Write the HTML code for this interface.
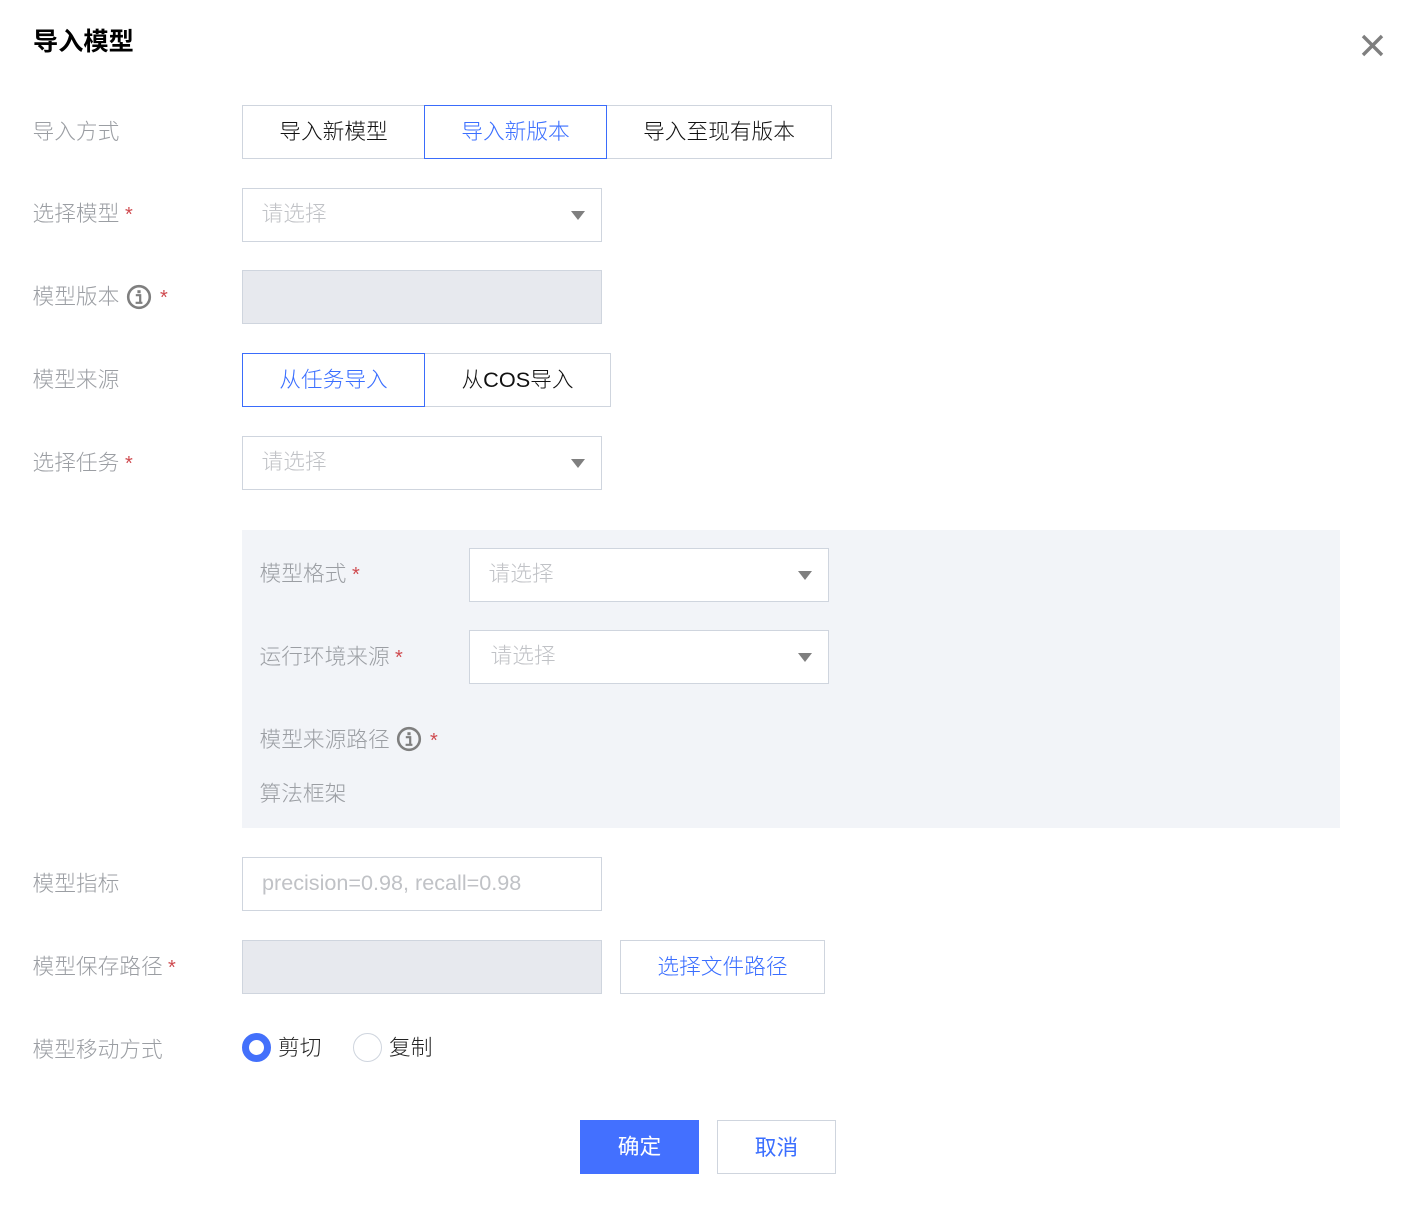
<!DOCTYPE html>
<html lang="zh-CN">
<head>
<meta charset="utf-8">
<title>导入模型</title>
<style>
html,body{margin:0;padding:0;background:#fff;}
body{width:1414px;height:1214px;position:relative;overflow:hidden;font-family:"Liberation Sans","Noto Sans CJK SC",sans-serif;font-size:21.7px;font-weight:300;}
.a{position:absolute;box-sizing:border-box;white-space:nowrap;}
.l{color:#9b9ea3;line-height:30px;height:30px;margin-top:1px;margin-left:-.5px;}
.b{border:1px solid #cfd5de;background:#fff;color:#111;text-align:center;line-height:52px;height:54px;}
.on{border-color:#3a6cfb;color:#3a6eff;z-index:2;}
.s{border:1px solid #cfd5de;background:#fff;width:360px;height:54px;color:#c0c2c6;line-height:50px;padding-left:18.5px;}
.p{line-height:50px;padding-left:19px;font-size:21.6px;}
.c:after{content:"";position:absolute;right:16px;top:22px;width:0;height:0;border-left:7.5px solid transparent;border-right:7.5px solid transparent;border-top:9px solid #7f7f7f;}
.d{background:#e7e9ee;border:1px solid #cfd5de;width:360px;height:54px;}
.r{color:#cf4a4f;font-size:20px;line-height:30px;height:30px;font-weight:400;margin-top:1px;}
svg{position:absolute;display:block;}
</style>
</head>
<body>
<div class="a" style="left:33px;top:25px;font-size:25.2px;font-weight:700;color:#000;line-height:34px;">导入模型</div>
<svg style="left:1360px;top:33px;" width="25" height="25" viewBox="0 0 25 25"><path d="M3 3L22 22M22 3L3 22" stroke="#7f7f7f" stroke-width="3.4" fill="none"/></svg>

<div class="a l" style="left:33px;top:116px;">导入方式</div>
<div class="a b" style="left:242px;top:105px;width:183px;">导入新模型</div>
<div class="a b on" style="left:424px;top:105px;width:183px;">导入新版本</div>
<div class="a b" style="left:606px;top:105px;width:226px;">导入至现有版本</div>

<div class="a l" style="left:33px;top:198px;">选择模型</div>
<div class="a r" style="left:125px;top:199px;">*</div>
<div class="a s c" style="left:242px;top:188px;">请选择</div>

<div class="a l" style="left:33px;top:281px;">模型版本</div>
<svg style="left:126px;top:284px;" width="26" height="26" viewBox="0 0 26 26"><circle cx="13" cy="13" r="10.8" fill="none" stroke="#7f7f7f" stroke-width="2.6"/><rect x="11.4" y="6.2" width="3.2" height="3" fill="#7f7f7f"/><path d="M9.8 11.2h4.4v7.2M9.6 18.8h6.8" fill="none" stroke="#7f7f7f" stroke-width="2.2"/></svg>
<div class="a r" style="left:160px;top:282px;">*</div>
<div class="a d" style="left:242px;top:270px;"></div>

<div class="a l" style="left:33px;top:364px;">模型来源</div>
<div class="a b on" style="left:242px;top:353px;width:183px;">从任务导入</div>
<div class="a b" style="left:424px;top:353px;width:187px;">从COS导入</div>

<div class="a l" style="left:33px;top:447px;">选择任务</div>
<div class="a r" style="left:125px;top:448px;">*</div>
<div class="a s c" style="left:242px;top:436px;">请选择</div>

<div class="a" style="left:242px;top:530px;width:1098px;height:298px;background:#f2f4f8;"></div>
<div class="a l" style="left:260px;top:558px;">模型格式</div>
<div class="a r" style="left:352px;top:559px;">*</div>
<div class="a s c" style="left:469px;top:548px;">请选择</div>
<div class="a l" style="left:260px;top:641px;">运行环境来源</div>
<div class="a r" style="left:395px;top:642px;">*</div>
<div class="a s c" style="left:469px;top:630px;padding-left:20.5px;">请选择</div>
<div class="a l" style="left:260px;top:724px;">模型来源路径</div>
<svg style="left:396px;top:726px;" width="26" height="26" viewBox="0 0 26 26"><circle cx="13" cy="13" r="10.8" fill="none" stroke="#7f7f7f" stroke-width="2.6"/><rect x="11.4" y="6.2" width="3.2" height="3" fill="#7f7f7f"/><path d="M9.8 11.2h4.4v7.2M9.6 18.8h6.8" fill="none" stroke="#7f7f7f" stroke-width="2.2"/></svg>
<div class="a r" style="left:430px;top:725px;">*</div>
<div class="a l" style="left:260px;top:778px;">算法框架</div>

<div class="a l" style="left:33px;top:868px;">模型指标</div>
<div class="a s p" style="left:242px;top:857px;">precision=0.98, recall=0.98</div>

<div class="a l" style="left:33px;top:951px;">模型保存路径</div>
<div class="a r" style="left:168px;top:952px;">*</div>
<div class="a d" style="left:242px;top:940px;"></div>
<div class="a b" style="left:620px;top:940px;width:205px;color:#3a6eff;">选择文件路径</div>

<div class="a l" style="left:33px;top:1034px;">模型移动方式</div>
<div class="a" style="left:242px;top:1033px;width:29px;height:29px;border-radius:50%;border:7px solid #4370fb;background:#fff;"></div>
<div class="a" style="left:278px;top:1033px;color:#222;line-height:30px;">剪切</div>
<div class="a" style="left:353px;top:1033px;width:29px;height:29px;border-radius:50%;border:1px solid #cfd5de;background:#fff;"></div>
<div class="a" style="left:389px;top:1033px;color:#222;line-height:30px;">复制</div>

<div class="a" style="left:580px;top:1120px;width:119px;height:54px;background:#4370ff;color:#fff;text-align:center;line-height:54px;font-weight:400;">确定</div>
<div class="a b" style="left:717px;top:1120px;width:119px;color:#3a6eff;font-weight:400;line-height:53px;">取消</div>
</body>
</html>
